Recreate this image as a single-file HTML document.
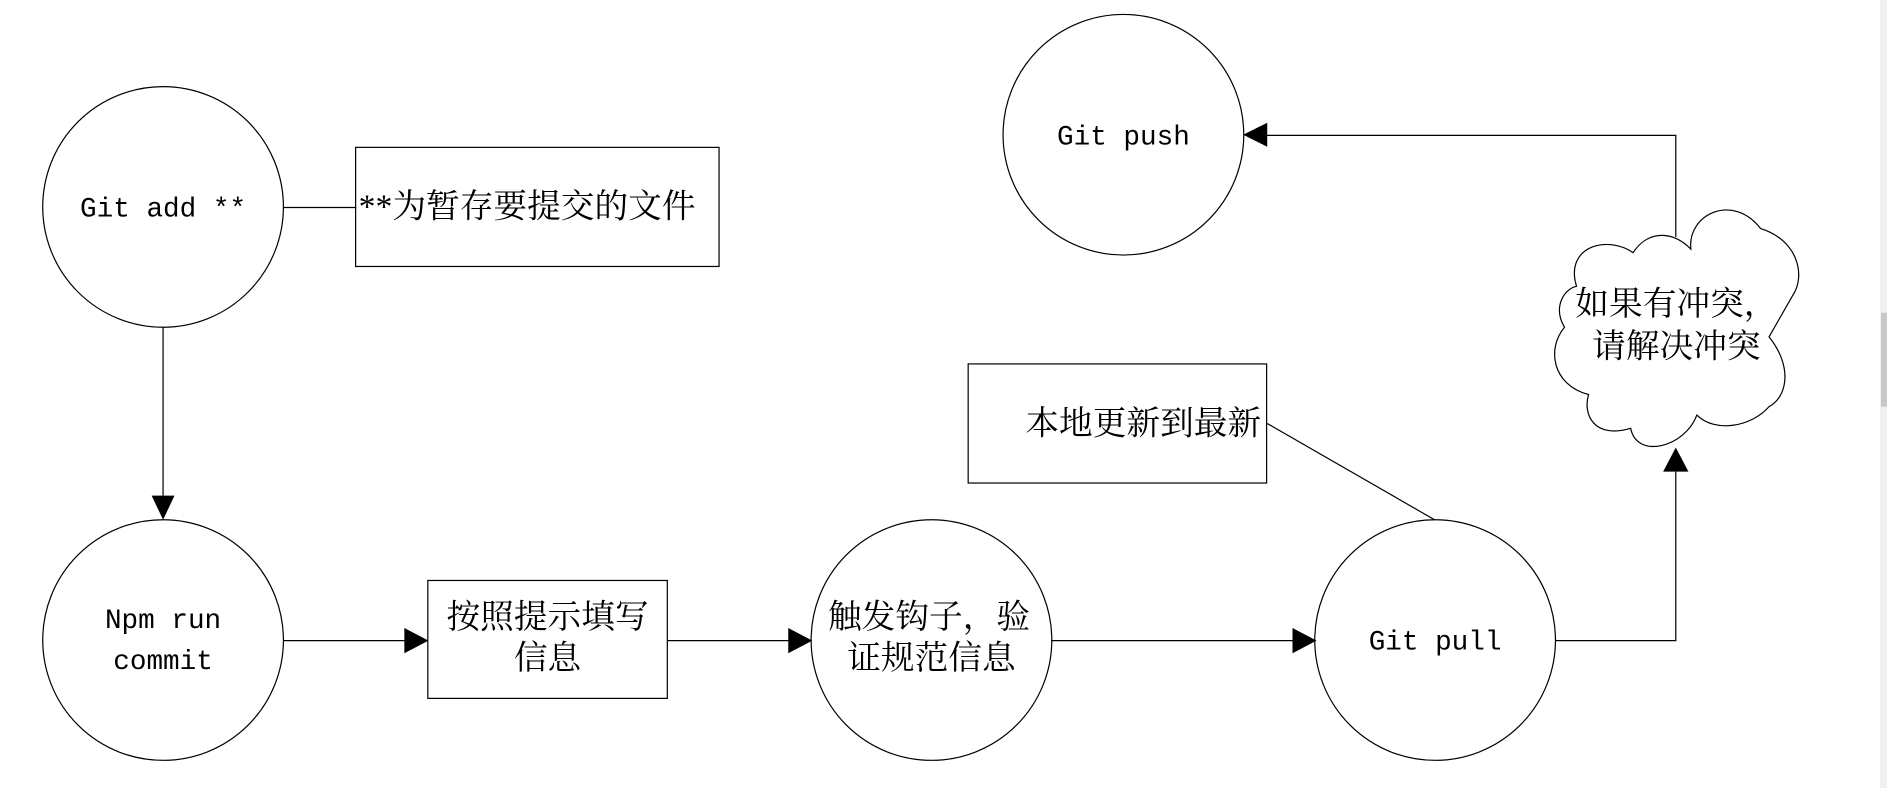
<!DOCTYPE html>
<html><head><meta charset="utf-8"><style>
html,body{margin:0;padding:0;background:#fff;overflow:hidden}
svg{display:block}
.m{font-family:"Liberation Mono","Noto Serif CJK SC",monospace;font-size:23px}
.c{font-family:"Liberation Serif","Noto Serif CJK SC",serif;font-size:28px}
</style></head><body>
<svg width="1887" height="788" viewBox="0 0 1568 655" preserveAspectRatio="none" xmlns="http://www.w3.org/2000/svg">
<g fill="none" stroke="#000" stroke-width="1">
<circle cx="135.5" cy="172" r="100"/>
<circle cx="933.5" cy="112" r="100"/>
<circle cx="135.5" cy="532" r="100"/>
<circle cx="774" cy="532" r="100"/>
<circle cx="1192.5" cy="532" r="100"/>
<rect x="295.5" y="122.5" width="302" height="99"/>
<rect x="804.5" y="302.5" width="248" height="99"/>
<rect x="355.5" y="482.5" width="199" height="98"/>
<path d="M235.5 172.5H296"/>
<path d="M135.5 272V412"/>
<path d="M235.5 532.5H337"/>
<path d="M554.5 532.5H656"/>
<path d="M873.5 532.5H1075"/>
<path d="M1292.5 532.5H1392.5V392"/>
<path d="M1392.5 197V112.5H1052"/>
<path d="M1053 352L1192 432"/>
<path d="M1310 238 C1300 205 1335 195 1357 210 C1368 193 1388 190 1405 207 C1402 178 1440 160 1463 190 C1495 200 1500 230 1490 245 L1470 280 C1490 305 1485 330 1470 338 C1455 355 1425 360 1410 345 C1400 372 1360 382 1355 356 C1325 365 1315 345 1320 328 C1290 320 1285 290 1300 272 C1290 255 1300 240 1310 238 Z"/>
</g>
<g fill="#000">
<path d="M126 412H145L135.5 432Z"/>
<path d="M336 522L356 532.5L336 543Z"/>
<path d="M655 522L675 532.5L655 543Z"/>
<path d="M1074 522L1094 532.5L1074 543Z"/>
<path d="M1382 392H1403L1392.5 372Z"/>
<path d="M1053 102V122L1033 112Z"/>
</g>
<rect x="1562" y="0" width="6" height="655" fill="#f0f0f0"/>
<rect x="1563" y="260" width="5" height="78" fill="#c8c8c8"/>
<g>
<text class="m" x="135.5" y="180" text-anchor="middle">Git add **</text>
<text class="m" x="933.5" y="120" text-anchor="middle">Git push</text>
<text class="m" x="135.5" y="522" text-anchor="middle">Npm run</text>
<text class="m" x="135.5" y="556" text-anchor="middle">commit</text>
<text class="m" x="1192.5" y="540" text-anchor="middle">Git pull</text>
<text class="c" x="298" y="181">**为暂存要提交的文件</text>
<text class="c" x="852" y="361">本地更新到最新</text>
<text class="c" x="455" y="522" text-anchor="middle">按照提示填写</text>
<text class="c" x="455" y="556" text-anchor="middle">信息</text>
<text class="c" x="772" y="522" text-anchor="middle">触发钩子，验</text>
<text class="c" x="774" y="556" text-anchor="middle">证规范信息</text>
<text class="c" x="1309" y="262">如果有冲突，</text>
<text class="c" x="1323" y="297">请解决冲突</text>
</g>
</svg>
</body></html>
